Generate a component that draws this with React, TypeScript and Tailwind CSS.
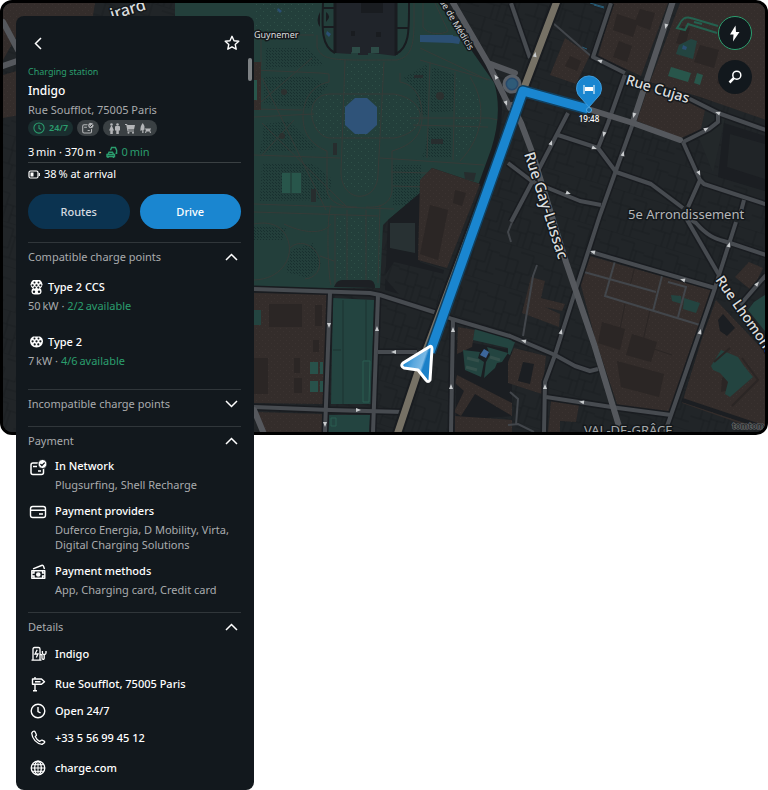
import { useState } from "react"
import type { ReactNode } from "react"
import clsx from "clsx"

const PARK_LINES = [
  "M254 70 320 73l9 1v8c-17 3-26 18-26 35s9 28 24 34v40c3 12 14 16 30 16",
  "M400 73v9c17 3 22 18 22 35s-9 28-30 34v40c-2 14-14 17-26 16",
  "M329 94h65c35 6 35 38 0 44h-65c-19-3-27-42 0-44Z",
  "M345 60 341 172c0 32 37 32 37 2L384 62",
  "M254 109 302 110M254 117l60-3M254 155l86 3M254 204l140 5M254 212l124 4",
  "M262 78 326 210M262 123l85 84M254 108l58-50M262 155l32-35",
  "M410 118h79l9 2M413 125l75 2M380 158l104 7M391 172l37 1M393 186l32 1",
  "M430 62 427 158M455 72l-2 88M470 77c18 28 13 60-10 84",
  "M420 48 488 80M420 60l70 20M317 35v12c5 15 20 13 80 13 13-3 17-12 17-38V3",
  "M423 3v24c4 8 20 8 25 4L435 3M254 35h60M261 36v30",
  "M335 215v70M347 210v76M366 210v76M380 205l-2 78M331 205c-5 15-3 70 0 80",
  "M254 224c20-4 32 5 35 20s-8 35-35 36M284 224c25 12 42 8 47 0M290 248c10-10 26-2 29 10s-4 20-14 21M320 256l14 5",
]

const PARK_STIPPLE = [
  "M265 48h42l18 17-60 4Z",
  "M264 77h45l20 8-20 23-45-4Z",
  "M264 124 289 121l28 28-57 4Z",
  "M262 163h50l20 16-4 21-68 1Z",
  "M404 77l24-13v53l-8-4-5-20Z",
  "M432 67l23 7-2 37-23 2Z",
  "M428 127h24v30h-30l4-12Z",
  "M393 165h28v30l-8 10h-20Z",
  "M254 226l32 2-4 12h-28Z",
  "M291 250l22-7 8 20-13 15-22-6Z",
]

const BROWN = [
  "M3 3H95L92 22 20 30 3 60Z",
  "M3 75 20 70V115L3 118Z",
  "M254 62h7v48h-7Z",
  "M254 293 328 294 324 404 254 403Z",
  "M254 412 324 414 322 432H264Z",
  "M432 168 480 184 447 268 418 260 420 180Z",
  "M565 38 590 55 576 84 550 75Z",
  "M613 3H668L641 76 598 56Z",
  "M680 3H766V120L700 97 650 82Z",
  "M648 88 688 101 716 115 709 126 681 138 637 121Z",
  "M586 255 711 290 670 412 618 407 595 338 580 282Z",
  "M531 277 545 281 541 298 565 304 562 311 545 307 560 314 559 327 522 313Z",
  "M514 348 546 356 542 394 508 383V362Z",
  "M457 375 512 403V416L475 394 461 416 454 412 464 391 455 383Z",
  "M455 416 512 420V432H455Z",
  "M458 327 475 330 472 347 457 354Z",
  "M551 401 579 405 576 422 560 421V432H548Z",
  "M716 300 765 352V432L682 403 703 335Z",
  "M749 262 763 268 752 291 735 277Z",
]

const DARK_BROWN = [
  "M269 304h33v23h-33Z",
  "M294 378h8v15h-8ZM294 358h6v15h-6ZM313 340h6v12h-6ZM315 305h7v21h-7Z",
  "M254 358h14v36h-14Z",
  "M455 190l11 3-4 13-9-3ZM430 205l18 5-10 50-18-6Z",
  "M617 14 638 21 633 37 613 30ZM640 9l15 4-5 17-16-6ZM619 41l13 5-5 16-14-5Z",
  "M700 45 719 50 714 68 694 62ZM682 26l8 2-5 18-9-3ZM722 65l14 5-5 18-14-5Z",
  "M602 322 625 329 620 350 598 343ZM632 334l25 8-6 20-25-7ZM617 361l47 13-5 23-38-10Z",
  "M722 378l9-7 2 18-12 3Z",
  "M570 56l11 5-4 10-12-5Z",
]

const GREEN = [
  "M333 298 374 300 371 404 331 404Z",
  "M329 415h41l-1 17h-41Z",
  "M475 328 512 338V349L473 340Z",
  "M463 350 480 352 478 358 484 362 481 377 465 370Z",
  "M487 347 508 353 502 362 497 363 495 368 484 378 486 362 490 355Z",
  "M721 350 738 357 744 366 753 377 730 397 725 394 728 382 720 373 713 370 711 366Z",
  "M671 295l10 1 1 8-10-3ZM684 298l16 5-4 10-13-4Z",
  "M754 302 768 293V335L748 310Z",
  "M679 45l12-6 6 2-4 18-17-5Z",
  "M508 340l7 2-5 13-2-1Z",
  "M254 310h7v15h-7Z",
]

const MINOR_ROADS = [
  "M511 3 530 58",
  "M611 3 593 57 625 73",
  "M688 98 718 113 766 130",
  "M625 75 608 123 598 148 616 172 651 184 683 208",
  "M686 218 719 275",
  "M568 113 540 167 511 222",
  "M558 135 598 148",
  "M508 163 533 182 580 201 601 205",
  "M683 142 709 129 718 122V113",
  "M683 142 700 180 688 207M700 180l4 4 64 21",
  "M633 123 600 215 575 292 555 355 545 382 544 432",
  "M254 289 370 293 380 295 437 313 452 319 510 336 555 355 575 366 590 371 598 369",
  "M330 293 325 432",
  "M378 295 373 432",
  "M254 407 330 410 403 412",
  "M378 352H417",
  "M453 320 451 432",
  "M591 252 715 288 671 415 665 432",
  "M546 397 618 408 671 415",
  "M684 215l12 8c14 16 22 16 34 20l36 12",
  "M736 222 719 275 715 288",
  "M766 275 740 305",
  "M744 200 740 215",
]

const ALLEYS = [
  "M584 272 656 292M615 261 605 296 700 325M662 276l-9 35M668 282l18 5-8 30",
  "M510 392l8 7-2 26M508 425l10-1 16 8",
  "M537 265l-4 11-10 60",
  "M512 222l-4 10 3 10",
  "M553 23 592 57",
]

// x, y, heading in degrees
const ARROWS: [number, number, number][] = [
  [535, 55, 10], [600, 61, 290], [666, 26, 195], [634, 115, 195], [604, 134, 195], [551, 143, 20],
  [594, 148, 110], [623, 154, 15], [718, 113, 290], [706, 129, 60], [699, 173, 155], [568, 193, 110],
  [593, 252, 285], [683, 280, 285], [729, 245, 15], [757, 284, 40], [561, 332, 15], [700, 332, 15],
  [524, 341, 285], [545, 387, 0], [582, 402, 280], [329, 325, 180], [377, 329, 0], [394, 352, 270],
  [358, 410, 90], [325, 424, 180], [453, 330, 0], [451, 387, 0], [496, 77, 330], [506, 103, 160],
]

function CityMap() {
  return (
    <svg
      viewBox="3 3 762 429"
      preserveAspectRatio="xMinYMin slice"
      className="block h-full w-full font-['Noto_Sans',sans-serif]"
      role="img"
      aria-label="Map of the route to Indigo"
    >
      <defs>
        <pattern id="parcels" width="46" height="42" patternUnits="userSpaceOnUse" patternTransform="rotate(17)">
          <rect width="46" height="42" fill="#212528" />
          <path
            d="M0 0H46M0 14H20V42M9 0V14M20 5H34V25H20M34 12H46M27 25V42M0 28H20M10 14v14M27 34H46M38 12v22M14 28v14"
            fill="none"
            stroke="#1a1e21"
          />
        </pattern>
        <pattern id="stipple" width="3" height="3" patternUnits="userSpaceOnUse">
          <path d="M0 0h1v1H0ZM2 2h1v1H2Z" fill="#18302f" />
        </pattern>
        <pattern id="dots" width="7" height="7" patternUnits="userSpaceOnUse">
          <path d="M1 1h1v1H1ZM4 4h1v1H4Z" fill="#2f5048" />
        </pattern>
        <pattern id="brownDots" width="6" height="6" patternUnits="userSpaceOnUse">
          <path d="M1 1h1v1H1ZM4 4h1v1H4Z" fill="#423936" />
        </pattern>
        <linearGradient id="cursor" x1="0" y1="0.3" x2="1" y2="0.7">
          <stop offset="0.1" stopColor="#1a86d0" />
          <stop offset="0.4" stopColor="#5ba8de" />
          <stop offset="0.65" stopColor="#7ab8e4" />
          <stop offset="0.72" stopColor="#1a80c8" />
        </linearGradient>
      </defs>

      <rect width="768" height="435" fill="url(#parcels)" />

      {/* Jardin du Luxembourg */}
      <path d="M250 3H441L495 80C501 102 500 128 495 143L480 184 432 168 422 178 420 193 388 220 383 225 380 288H250Z" fill="#233f3b" />
      <path d="M175 3h79v14h-79Z" fill="#233f3b" />
      <path d="M329 94h65c35 6 35 38 0 44l-14 1-2 35c0 24-37 24-37-2l1-34h-13c-19-3-27-42 0-44ZM345 62l39 1-1 30h-39ZM336 215h44v65h-44ZM254 3h60v30h-60ZM456 75c34 20 34 60 0 84Z" fill="url(#dots)" />
      {PARK_STIPPLE.map((d) => (
        <path key={d} d={d} fill="url(#stipple)" />
      ))}
      {PARK_LINES.map((d) => (
        <path key={d} d={d} fill="none" stroke="#363b38" />
      ))}
      <circle cx="284" cy="92" r="3" fill="#2c302f" />
      <circle cx="282" cy="136" r="3" fill="#2c302f" />
      <circle cx="440" cy="96" r="4" fill="#2c302f" />
      <path d="M333 143h4v12h-4ZM431 139h12v5h-12ZM311 189h5v13h-5ZM414 75h9v3h-9ZM464 172l12 1-2 8-9-2Z" fill="#272d2e" />
      <path d="M282 173h19v20h-19Z" fill="#28564b" />
      <path d="M291 173v20" stroke="#1f3532" />
      <path d="M355 98h12l10 9v18l-10 9h-12l-10-9v-18Z" fill="#2f5379" />
      <path d="M420 35h33v1l8 1-2 7-7-1-32-1Z" fill="#2b4f73" />
      <path d="M278 8l4 3-2 2-3-3ZM327 31l4 3-2 3-3-3Z" fill="#2b4f73" />
      <path d="M335 3H396V56L372 53H368v2h-10v-3h-7v2l-16-1Z" fill="#20242a" />
      <path d="M361 3h22v10h-22ZM351 31h4v5h-4ZM376 32h5v5h-5Z" fill="#191c20" />
      <path d="M335 3v50M396 3v52" fill="none" stroke="#191c20" strokeWidth="3" />
      <path d="M335 53c-14-7-13-25-12-50M396 54c14-7 13-25 13-51M322 8h12M322 27h12M396 28h13" fill="none" stroke="#191c20" strokeWidth="2" />
      <path d="M320 12q-5 9 0 15ZM326 12q6 4 0 10Z" fill="#191c20" />
      <path d="M352 47h8v6h-8ZM371 47h8v6h-8Z" fill="#2d4c47" />
      <path d="M388 220 420 193V262L444 270 437 305 385 290Z" fill="#1b1e22" />
      <path d="M390 223h25v30l-25-5Z" fill="#283133" />
      <path d="M384 277l10-15 50 12-9 35-30-8Z" fill="url(#parcels)" />
      <path d="M335 285q2-5 8-5h26q6 0 6 8l-41-1Z" fill="#1d2024" />
      <path d="M441 3 496 82C503 105 500 128 493 150L480 186" fill="none" stroke="#191c20" strokeWidth="4" />

      <path d="M456 340 512 350V416L456 420Z" fill="#1b1e22" />
      {BROWN.map((d) => (
        <g key={d}>
          <path d={d} fill="#342d2b" />
          <path d={d} fill="url(#brownDots)" opacity="0.5" />
        </g>
      ))}
      {DARK_BROWN.map((d) => (
        <path key={d} d={d} fill="#2b2625" />
      ))}
      {GREEN.map((d) => (
        <path key={d} d={d} fill="#234440" />
      ))}
      <path d="M523 362l11 2-4 20-12-3Z" fill="#1b1e22" />
      <path d="M705 110l20 8-12 55-14-35Z" fill="#23282a" />
      <path d="M724 123l44 14v55l-50-15Z" fill="#1b1e22" />
      <path d="M730 134l35 10v35l-38-12Z" fill="#202427" />
      <path d="M682 400 766 428" fill="none" stroke="#1b1e22" strokeWidth="4" />
      <path d="M718 320l5-6 12 14-8 8-7-5Z" fill="#1b1e22" />
      <path d="M730 348l-16 14M742 358l16 22-26 26" fill="none" stroke="#2b2625" strokeWidth="2" />
      <path d="M343 300v104M366 300v60M333 350h8" stroke="#1c3231" fill="none" />
      <path d="M363 361h7l-1 41h-6Z" fill="none" stroke="#2b5c50" />
      <path d="M331 418h5v8h-5Z" fill="none" stroke="#2b5c50" />
      <path d="M310 362h8v12h-8ZM310 381h8v11h-8ZM320 362h3v12h-3ZM320 381h3v11h-3Z" fill="#28514a" />
      <path d="M671 67l20 6-3 9-20-6ZM697 73l6 2-3 10-6-2ZM254 80h3v20h-3Z" fill="#28564b" />
      <path d="M718 26l-27-8c-6-2-9 1-12 7l-2 3 8 2 3-6 29 9M694 22l8 2" fill="none" stroke="#24614f" strokeWidth="2" />
      <path d="M594 5l10 3M590 3l14 4M582 47l5 2" stroke="#27607d" fill="none" />
      <path d="M683 45l4 2-1 3-4-1Z" fill="#2b4f73" />
      <path d="M484 349l5 3-3 6-6-3Z" fill="#3c659a" />
      <path d="M467 358l12 3M466 367l11 3M490 357l10 3" stroke="#34504b" strokeWidth="3" />
      <path d="M635 266l-5 20M625 304l-6 30M650 310l-8 35 30 10" stroke="#2b2625" fill="none" />

      {/* Streets */}
      {ALLEYS.map((d) => (
        <path key={d} d={d} fill="none" stroke="#42464b" strokeWidth="2" />
      ))}
      {MINOR_ROADS.map((d) => (
        <path key={d} d={d} fill="none" stroke="#191c20" strokeWidth="7" />
      ))}
      {MINOR_ROADS.map((d) => (
        <path key={d} d={d} fill="none" stroke="#474b50" strokeWidth="4" strokeLinejoin="round" />
      ))}
      <g fill="none" stroke="#55585d" strokeWidth="6" strokeLinecap="round">
        <path d="M452 1 488 63 515 73M488 63 510 108" />
        <path d="M673 1 633 122" />
        <path d="M588 109 633 123 680 140" />
        <path d="M512 105 521 123 532 152 566 262 594 344 622 436" />
        <path d="M254 410 264 434M3 22 18 50M3 66 20 60" />
      </g>
      <path d="M557 1 524 88 418 372 396 438" fill="none" stroke="#191c20" strokeWidth="11" />
      <path d="M557 1 524 88 418 372 396 438" fill="none" stroke="#767165" strokeWidth="7" />
      <circle cx="512" cy="84" r="8" fill="#294a6b" stroke="#5b6067" strokeWidth="3" />
      <circle cx="512" cy="84" r="5" fill="#2f5b78" />
      {ARROWS.map(([x, y, deg]) => (
        <path key={`${x}-${y}`} d="M0-3 2 2H-2Z" fill="#c9ccce" transform={`translate(${x} ${y}) rotate(${deg})`} />
      ))}

      {/* Route */}
      <path d="M430 352 523 91 588 109" fill="none" stroke="#12405f" strokeWidth="12" strokeLinejoin="round" />
      <path d="M430 352 523 91 588 109" fill="none" stroke="#1a86d0" strokeWidth="9" strokeLinejoin="round" />
      <path
        d="M429 347Q432 345 432 349L430 380Q428 383 426 380L418 370 404 368Q400 366 403 363Z"
        fill="url(#cursor)"
        stroke="#fff"
        strokeWidth="3"
        strokeLinejoin="round"
      />
      <circle cx="589" cy="110" r="2.5" fill="#176ba6" stroke="#4fa9e4" />
      <path d="M589 107 581 98A12.5 12.5 0 1 1 597 98Z" fill="#1a86d0" stroke="#3d9cdc" />
      <path d="M584 85v9M594 85v9" fill="none" stroke="#fff" />
      <path d="M585 87h8v4h-8Z" fill="#fff" />

      {/* Labels */}
      <g fill="#dcdedf" stroke="#15191c" strokeWidth="3" strokeLinejoin="round" paintOrder="stroke">
        <text x="254" y="38" fontSize="9">Guynemer</text>
        <text fontSize="9" transform="translate(439 1) rotate(59)">ue de Médicis</text>
        <g fontWeight="500">
          <text fontSize="16" transform="translate(112 20) rotate(-17)">irard</text>
          <text fontSize="14" transform="translate(625 84) rotate(17)">Rue Cujas</text>
          <text fontSize="15" transform="translate(524 154) rotate(72)">Rue Gay-Lussac</text>
          <text fontSize="14" transform="translate(715 280) rotate(55)">Rue Lhomond</text>
        </g>
        <text x="628" y="219" fontSize="13" fill="#b4b6b8">5e Arrondissement</text>
        <text x="584" y="435" fontSize="13" fill="#a5a8aa">VAL-DE-GRÂCE</text>
      </g>
      <text x="589" y="122" fontSize="8" fontWeight="500" textAnchor="middle" fill="#fff">19:48</text>
      <text x="732" y="429" fontSize="8" fontWeight="700" fill="#2b2d2f" stroke="#707274" strokeWidth="1" paintOrder="stroke">tomtom</text>
    </svg>
  )
}

function CardCheckIcon({ size = 17 }: { size?: number }) {
  return (
    <svg width={size} height={size} viewBox="0 0 17 17" fill="none">
      <rect x="1" y="4" width="12.5" height="11.5" rx="2" stroke="currentColor" strokeWidth="1.5" />
      <path d="M3 7.5h4M8 12h3" stroke="currentColor" strokeWidth="1.5" />
      <circle cx="12.5" cy="5" r="4.5" fill="currentColor" stroke="#12181d" />
      <path d="m10.4 5 1.5 1.5 2.8-2.9" stroke="#12181d" strokeWidth="1.3" />
    </svg>
  )
}

function CardIcon() {
  return (
    <svg width="18" height="14" viewBox="0 0 18 14" fill="none" stroke="currentColor" strokeWidth="1.4">
      <rect x="1.5" y="1.5" width="15" height="11" rx="2.2" />
      <path d="M2 5.2h14M10 9h4" strokeWidth="1.6" />
    </svg>
  )
}

function CashIcon() {
  return (
    <svg width="17" height="16" viewBox="0 0 17 16" fill="none" stroke="currentColor" strokeWidth="1.4">
      <path d="M1.8 6.8h13v7.4h-13Z" strokeLinejoin="round" />
      <path d="m3 4.8 8.5-3.3q1.500-.6 2 .8l1 2.700" />
      <circle cx="8.3" cy="10.5" r="1.6" fill="currentColor" />
      <path d="M2 9h2V7M2 12h2v2M14.600 9h-2V7M14.600 12h-2v2" />
    </svg>
  )
}

function StationIcon() {
  return (
    <svg width="17" height="16" viewBox="0 0 17 16" fill="none" stroke="currentColor" strokeWidth="1.3">
      <path d="M3 14V3q0-1.5 1.5-1.5h4Q10 1.5 10 3v11M1.5 14.2h10" />
      <path d="M7.2 3.8 5 8h3L6.3 11.5" />
      <path d="M10 8.5h1q1 0 1 1V12q0 1.3 1.1 1.3T14.2 12V8.5M12.4 5v2q0 1.5 1.8 1.5T16 7V5" />
    </svg>
  )
}

function SignpostIcon() {
  return (
    <svg width="16" height="16" viewBox="0 0 16 16" fill="none" stroke="currentColor" strokeWidth="1.4">
      <path d="M2.5 3h9l3 2.7-3 2.6h-9Z" strokeLinejoin="round" />
      <path d="M5 1v2M5 8.5v6M3 14.8h4M5 5.7h5.5" />
    </svg>
  )
}

function ClockIcon({ size = 16 }: { size?: number }) {
  return (
    <svg width={size} height={size} viewBox="0 0 16 16" fill="none" stroke="currentColor" strokeWidth="1.4">
      <circle cx="8" cy="8" r="6.8" />
      <path d="M8 4v4.5l2.6 1.5" />
    </svg>
  )
}

function PhoneIcon() {
  return (
    <svg width="16" height="16" viewBox="0 0 16 16" fill="none" stroke="currentColor" strokeWidth="1.3" strokeLinejoin="round">
      <path d="M2.6 1.8 1.7 3.2C2.2 9 6.5 13.6 12 14.4l2.4-1.6q.8-1-.3-1.7l-2-.9q-.8-.3-1.5.5l-1 .7C7.5 10.2 6 8.6 5.2 6.6l.8-.8q.7-.7.2-1.5L5 1.7q-.7-1-1.6-.4Z" />
    </svg>
  )
}

function GlobeIcon() {
  return (
    <svg width="16" height="16" viewBox="0 0 16 16" fill="none" stroke="currentColor" strokeWidth="1.3">
      <circle cx="8" cy="8" r="6.8" />
      <ellipse cx="8" cy="8" rx="3.3" ry="6.8" />
      <path d="M8 1v14M1.2 8h13.6M2.2 4.7h11.6M2.2 11.3h11.6" strokeWidth="1" />
    </svg>
  )
}

function Type2Icon({ ccs }: { ccs?: boolean }) {
  return (
    <svg width="15" height={ccs ? 16 : 14} viewBox={ccs ? "0 0 15 16" : "0 0 15 14"}>
      {ccs && <rect x="2.5" y="9" width="10" height="6.5" rx="3.2" fill="#fff" />}
      <path
        d={ccs ? "M4 1h7q2.5 2 2.5 4.5Q13 10 7.5 10.3 2 10 1.5 5.5 1.5 3 4 1Z" : "M4 1.5h7Q14 3 14 6.5 13.5 12 7.5 12.5 1.5 12 1 6.5 1 3 4 1.5Z"}
        fill="#fff"
      />
      <g fill="#12181d">
        <circle cx="5.5" cy="3.5" r="1" />
        <circle cx="9.5" cy="3.5" r="1" />
        <circle cx="3.6" cy="6.3" r="1.1" />
        <circle cx="7.5" cy="6.3" r="1.1" />
        <circle cx="11.4" cy="6.3" r="1.1" />
        <circle cx="5.7" cy={ccs ? 8.6 : 9.4} r="1.1" />
        <circle cx="9.3" cy={ccs ? 8.6 : 9.4} r="1.1" />
        {ccs && <circle cx="5" cy="12.8" r="1.2" />}
        {ccs && <circle cx="10" cy="12.8" r="1.2" />}
      </g>
    </svg>
  )
}

function Chevron({ open }: { open: boolean }) {
  return (
    <svg width="13" height="8" viewBox="0 0 13 8" fill="none" stroke="#fff" strokeWidth="1.5" className={clsx("mr-[3px]", !open && "rotate-180")}>
      <path d="m1 7 5.5-5.5L12 7" />
    </svg>
  )
}

interface SectionProps {
  title: string
  defaultOpen?: boolean
  className?: string
  children?: ReactNode
}

function Section({ title, defaultOpen = false, className, children }: SectionProps) {
  const [open, setOpen] = useState(defaultOpen)

  return (
    <section className={clsx("border-t border-[#30363a] pt-1.5", className)}>
      <h2>
        <button
          type="button"
          aria-expanded={open}
          onClick={() => setOpen(!open)}
          className="flex h-4 w-full items-center justify-between text-left text-[11px] leading-4 text-[#a9abad]"
        >
          {title}
          <Chevron open={open} />
        </button>
      </h2>
      {open && children}
    </section>
  )
}

// Units are set off with a thin space
const CHARGE_POINTS = [
  { name: "Type 2 CCS", power: "50\u2009kW", available: "2/2\u2009available", ccs: true },
  { name: "Type 2", power: "7\u2009kW", available: "4/6\u2009available", ccs: false },
]

const PAYMENT = [
  { title: "In Network", text: "Plugsurfing, Shell Recharge", icon: <CardCheckIcon /> },
  { title: "Payment providers", text: "Duferco Energia, D Mobility, Virta, Digital Charging Solutions", icon: <CardIcon /> },
  { title: "Payment methods", text: "App, Charging card, Credit card", icon: <CashIcon /> },
]

const DETAILS = [
  { text: "Indigo", icon: <StationIcon />, height: "h-[30px]" },
  { text: "Rue Soufflot, 75005 Paris", icon: <SignpostIcon />, height: "h-[30px]" },
  { text: "Open 24/7", icon: <ClockIcon />, height: "h-6" },
  { text: "+33 5 56 99 45 12", icon: <PhoneIcon />, height: "h-[30px]", href: "tel:+33556994512" },
  { text: "charge.com", icon: <GlobeIcon />, height: "h-[30px]", href: "#charge" },
]

function StationPanel() {
  return (
    <aside className="relative w-[238px] rounded-lg bg-[#12181d] pt-[17px] pr-[13px] pb-[7px] pl-3 text-[11px] leading-4 text-white">
      <div className="absolute top-[42px] right-0.5 h-[23px] w-1 rounded-full bg-[#7d8184]" />

      <header className="flex h-5 items-center justify-between">
        <button type="button" aria-label="Back" className="pl-1.5">
          <svg width="8" height="13" viewBox="0 0 8 13" fill="none" stroke="#fff" strokeWidth="1.5">
            <path d="M7 1 1.5 6.5 7 12" />
          </svg>
        </button>
        <button type="button" aria-label="Add to favourites" className="pr-px">
          <svg width="16" height="16" viewBox="0 0 16 16" fill="none" stroke="#fff" strokeWidth="1.4" strokeLinejoin="round">
            <path d="m8 1.3 2 4.4 4.800.5-3.600 3.200 1 4.800L8 11.800l-4.200 2.400 1-4.800L1.200 6.200 6 5.700Z" />
          </svg>
        </button>
      </header>

      <p className="mt-[11px] text-[9px] text-[#2b9e6e]">Charging station</p>
      <h1 className="mt-px text-xs font-medium leading-5">Indigo</h1>
      <p className="mt-px text-[#a9abad]">Rue Soufflot, 75005 Paris</p>

      <div className="mt-0.5 flex gap-1">
        <span className="flex h-4 items-center gap-1 rounded-full bg-[#1a2e2f] px-[5px] text-[9px] font-semibold text-[#2b9e6e]">
          <ClockIcon size={12} />
          24/7
        </span>
        <span className="flex h-4 items-center rounded-full bg-[#3a4043] px-[5px] text-[#b4b6b8]">
          <CardCheckIcon size={12} />
        </span>
        <span className="flex h-4 items-center gap-[5px] rounded-full bg-[#3a4043] px-1.5 text-[#b4b6b8]">
          <svg width="11" height="11" viewBox="0 0 11 11" fill="currentColor">
            <circle cx="2.5" cy="1.5" r="1.3" />
            <circle cx="8.5" cy="1.5" r="1.3" />
            <path d="M2 3h1l2 4.5H3.8V11H1.3V7.5H0ZM7 3h3q1 0 1 1v3.5H9.8V11H7.3V7.5H6V4q0-1 1-1Z" />
          </svg>
          <svg width="10" height="11" viewBox="0 0 10 11" fill="currentColor">
            <path d="M0 1h2l.5 1H10L9 6.5H3.2l.2 1H9v1H2.5L1.3 2H0Z" />
            <circle cx="3.5" cy="9.7" r="1" />
            <circle cx="8" cy="9.7" r="1" />
          </svg>
          <svg width="11" height="11" viewBox="0 0 11 11" fill="currentColor">
            <path d="M2.8 0q2 2 1.7 6.5l-1 .5V10H2.2V7L.5 8Q0 3 2.8 0ZM5 5.5h6v1h-1L11 10H9.9l-.4-1.500h-3L6.100 10H5l1-3.500H5Z" />
          </svg>
        </span>
      </div>

      <p className="mt-2 flex items-center gap-1">
        <span>{"3\u2009min · 370\u2009m ·"}</span>
        <svg width="12" height="12" viewBox="0 0 12 12" fill="none" stroke="#2b9e6e" strokeWidth="1.4">
          <path d="M2 8.5 3 6.2h3.500l1.200 2.300M1 8.500h7.500v2H1ZM2 10.500V12M7.500 10.500V12" />
          <path d="M4.500 4.200 5.600 1.500h3.800l1.200 2.700v3H9.500" />
        </svg>
        <span className="text-[#2b9e6e]">{"0\u2009min"}</span>
      </p>
      <hr className="mt-0.5 border-[#3a4043]" />
      <p className="mt-[3px] flex items-center gap-1">
        <svg width="12" height="9" viewBox="0 0 12 9" fill="none" stroke="#fff" strokeWidth="1.2">
          <rect x="1" y="1" width="9" height="7" rx="1.5" />
          <path d="M11.3 3v3" />
          <path d="M2.5 2.5h3v4h-3Z" fill="#fff" stroke="none" />
        </svg>
        {"38\u2009% at arrival"}
      </p>

      <div className="mt-3 mb-[13px] grid grid-cols-2 gap-2.5 font-medium">
        <button type="button" className="h-[35px] rounded-full bg-[#0b3350] text-[#d5dbe0]">Routes</button>
        <button type="button" className="h-[35px] rounded-full bg-[#1a86d0]">Drive</button>
      </div>

      <Section title="Compatible charge points" defaultOpen className="pb-5">
        <ul className="mt-[14px] flex flex-col gap-5">
          {CHARGE_POINTS.map((point) => (
            <li key={point.name}>
              <h3 className="flex h-4 items-center gap-1 pl-px font-medium">
                <Type2Icon ccs={point.ccs} />
                {point.name}
              </h3>
              <p className="mt-[3px] text-[#a9abad]">
                {point.power} · <span className="text-[#2b9e6e]">{point.available}</span>
              </p>
            </li>
          ))}
        </ul>
      </Section>

      <Section title="Incompatible charge points" className="pb-3.5" />

      <Section title="Payment" defaultOpen className="pb-[15px]">
        <ul className="mt-[9px] flex flex-col gap-[11px]">
          {PAYMENT.map((item) => (
            <li key={item.title} className="flex items-start gap-[7px]">
              <span className="flex h-[18px] w-5 shrink-0 items-center justify-center">{item.icon}</span>
              <div>
                <h3 className="font-medium">{item.title}</h3>
                <p className="mt-[3px] leading-[15px] text-[#a9abad]">{item.text}</p>
              </div>
            </li>
          ))}
        </ul>
      </Section>

      <Section title="Details" defaultOpen>
        <ul className="mt-1 font-medium">
          {DETAILS.map((item) => (
            <li key={item.text} className={clsx("flex items-center gap-[7px]", item.height)}>
              <span className="flex w-5 shrink-0 justify-center">{item.icon}</span>
              {item.href ? <a href={item.href}>{item.text}</a> : item.text}
            </li>
          ))}
        </ul>
      </Section>
    </aside>
  )
}

export default function App() {
  return (
    <main className="relative bg-white font-['Noto_Sans',sans-serif]">
      <div className="absolute inset-x-0 top-0 h-[435px] overflow-hidden rounded-xl border-[3px] border-black bg-[#212528]">
        <CityMap />
      </div>

      <div className="relative flex items-start justify-between px-4 pt-4">
        <StationPanel />
        <div className="flex flex-col gap-2.5">
          <button type="button" aria-label="Charging stations" className="flex size-[34px] items-center justify-center rounded-full border border-[#2b9e6e] bg-[#12181d]">
            <svg width="12" height="17" viewBox="0 0 12 17" fill="#fff">
              <path d="M6.5.5 1 9.5h3.5L4 16.5l6.5-9.5H7Z" />
            </svg>
          </button>
          <button type="button" aria-label="Search" className="flex size-[34px] items-center justify-center rounded-full bg-[#12181d]">
            <svg width="14" height="14" viewBox="0 0 14 14" fill="none" stroke="#fff">
              <circle cx="8.8" cy="5.2" r="4" strokeWidth="1.5" />
              <path d="M5.8 8.2 1.5 12.5" strokeWidth="2.5" />
            </svg>
          </button>
        </div>
      </div>
    </main>
  )
}
